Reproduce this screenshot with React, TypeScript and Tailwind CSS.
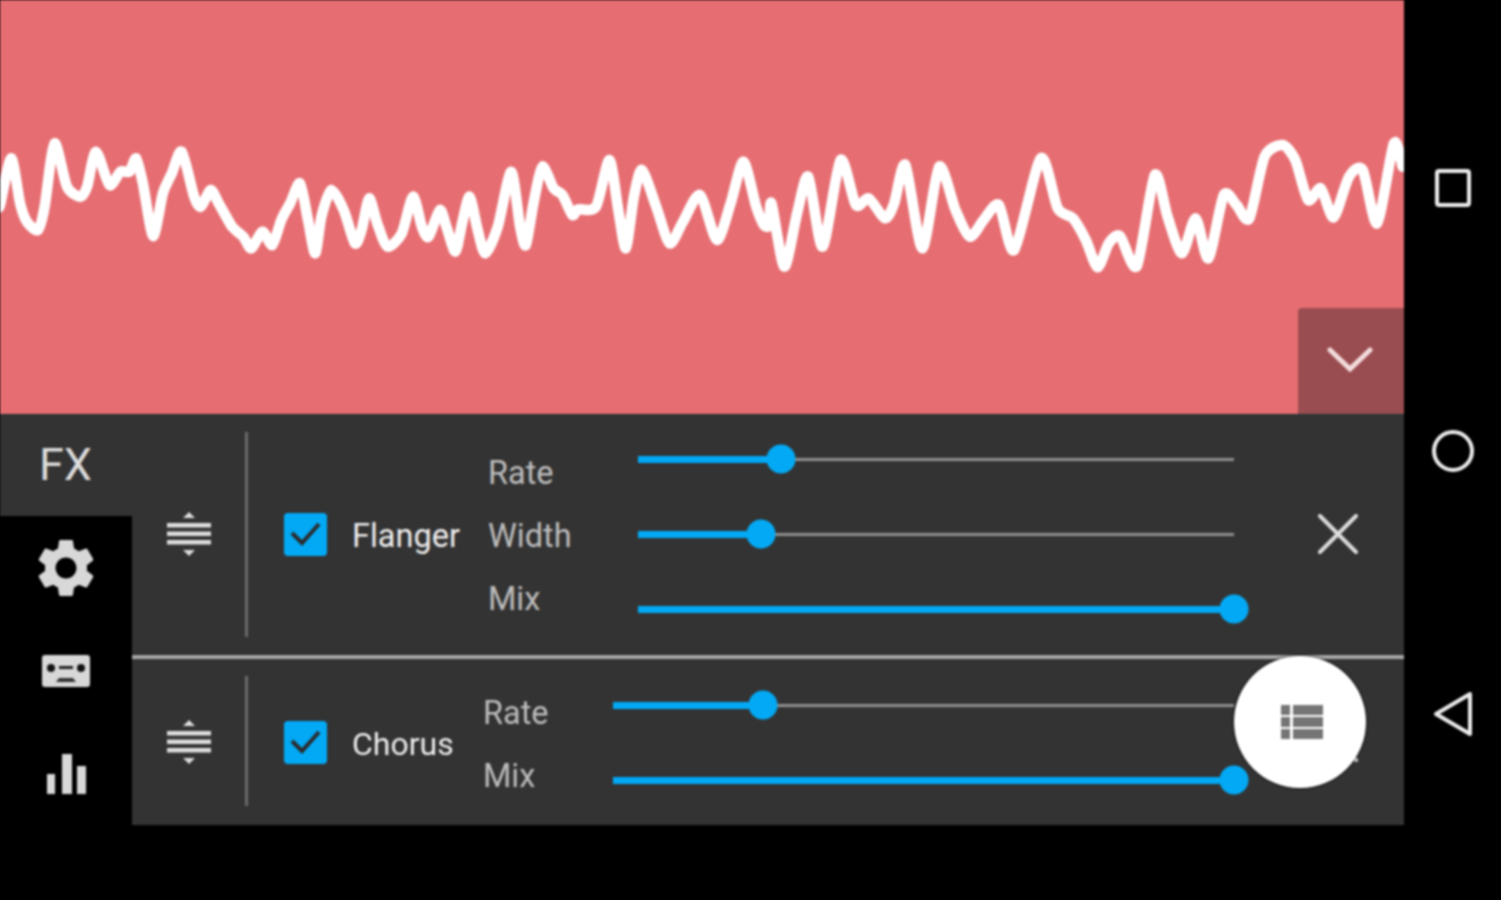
import React from 'react';

const font = { fontFamily: 'Roboto, "Liberation Sans", sans-serif' };

// wave samples read off the picture, left half then right half
const waveLeft: number[][] = [[-6,225],[0,225],[25,85],[45,220],[60,275],[85,300],[100,230],[122,40],[150,170],[180,200],[195,170],[215,65],[245,165],[270,125],[290,125],[305,85],[320,160],[343,318],[365,190],[385,130],[407,65],[435,200],[450,230],[472,180],[490,220],[520,290],[545,320],[563,355],[588,305],[610,345],[630,270],[650,220],[672,160],[690,270],[706,370],[720,260],[742,180],[770,240],[795,340],[810,300],[827,205],[845,280],[868,350],[900,310],[925,200],[945,290],[960,320],[985,240],[1000,290],[1020,365],[1035,280],[1052,200],[1070,300],[1087,370],[1115,290],[1145,125],[1165,290],[1178,345],[1195,220],[1215,110],[1240,175],[1260,195],[1282,255],[1295,238],[1335,230],[1365,90],[1385,240],[1402,355],[1420,200],[1438,120],[1470,230],[1500,340],[1530,275]];
const waveRight: number[][] = [[0,195],[33,330],[60,220],[85,95],[110,230],[125,285],[135,285],[140,220],[165,410],[190,250],[212,140],[240,350],[275,90],[305,225],[330,205],[362,265],[380,220],[402,105],[435,355],[468,110],[500,240],[528,320],[555,270],[585,225],[615,360],[667,85],[700,235],[730,265],[755,330],[778,412],[800,340],[822,318],[855,408],[890,135],[915,260],[943,370],[970,265],[995,385],[1025,195],[1050,225],[1075,265],[1105,80],[1140,45],[1165,90],[1190,210],[1215,175],[1240,262],[1270,140],[1297,120],[1325,280],[1358,40],[1375,110]];

const wavePoints = [
  ...waveLeft.map(([x, y]) => [x / 2.24, 130 + y / 3]),
  ...waveRight.map(([x, y]) => [700 + x / 1.957, 130 + y / 3]),
];

function smoothPath(pts: number[][]) {
  let d = `M${pts[0][0]} ${pts[0][1]}`;
  for (let i = 0; i < pts.length - 1; i++) {
    const p0 = pts[Math.max(i - 1, 0)];
    const p1 = pts[i];
    const p2 = pts[i + 1];
    const p3 = pts[Math.min(i + 2, pts.length - 1)];
    const c1x = p1[0] + (p2[0] - p0[0]) / 8;
    const c1y = p1[1] + (p2[1] - p0[1]) / 8;
    const c2x = p2[0] - (p3[0] - p1[0]) / 8;
    const c2y = p2[1] - (p3[1] - p1[1]) / 8;
    d += ` C${c1x.toFixed(1)} ${c1y.toFixed(1)} ${c2x.toFixed(1)} ${c2y.toFixed(1)} ${p2[0].toFixed(1)} ${p2[1].toFixed(1)}`;
  }
  return d;
}

const Slider = ({ value }: { value: number }) => (
  <div className="relative h-[7px] w-full flex items-center">
    <div className="h-[3px] w-full bg-[#8f8f8f]" />
    <div className="absolute left-0 top-0 h-[7px] bg-[#03a9f4]" style={{ width: `${value}%` }} />
    <div
      className="absolute top-1/2 z-20 h-[29px] w-[29px] -translate-x-1/2 -translate-y-1/2 rounded-full bg-[#03a9f4]"
      style={{ left: `${value}%` }}
    />
  </div>
);

const Handle = () => (
  <svg width="44" height="44" viewBox="0 0 44 44" className="text-[#dedede]" fill="currentColor">
    <path d="M16 6 L22 0 L28 6 Z" />
    <rect x="0" y="11" width="44" height="4.5" />
    <rect x="0" y="19.5" width="44" height="4.5" />
    <rect x="0" y="28" width="44" height="4.5" />
    <path d="M16 38 L22 44 L28 38 Z" />
  </svg>
);

const Check = () => (
  <div className="flex h-[43px] w-[43px] shrink-0 items-center justify-center rounded-[4px] bg-[#03a9f4]">
    <svg width="34" height="28" viewBox="0 0 34 28" fill="none">
      <path d="M3 13 L13 23 L30 4" stroke="#2b2b2b" strokeWidth="4" />
    </svg>
  </div>
);

const CloseIcon = () => (
  <svg width="40" height="40" viewBox="0 0 40 40" fill="none" stroke="#dcdcdc" strokeWidth="4" strokeLinecap="round">
    <path d="M2 2 L38 38 M38 2 L2 38" />
  </svg>
);

const Gear = () => (
  <svg width="70" height="70" viewBox="0 0 24 24" fill="#d8d8d8">
    <path d="M19.14 12.94c.04-.3.06-.61.06-.94 0-.32-.02-.64-.07-.94l2.03-1.58c.18-.14.23-.41.12-.61l-1.92-3.32c-.12-.22-.37-.29-.59-.22l-2.39.96c-.5-.38-1.03-.7-1.62-.94l-.36-2.54c-.04-.24-.24-.41-.48-.41h-3.84c-.24 0-.43.17-.47.41l-.36 2.54c-.59.24-1.13.57-1.62.94l-2.39-.96c-.22-.08-.47 0-.59.22L2.74 8.87c-.12.21-.08.47.12.61l2.03 1.58c-.05.3-.09.63-.09.94s.02.64.07.94l-2.03 1.58c-.18.14-.23.41-.12.61l1.92 3.32c.12.22.37.29.59.22l2.39-.96c.5.38 1.03.7 1.62.94l.36 2.54c.05.24.24.41.48.41h3.84c.24 0 .44-.17.47-.41l.36-2.54c.59-.24 1.13-.56 1.62-.94l2.39.96c.22.08.47 0 .59-.22l1.92-3.32c.12-.22.07-.47-.12-.61l-2.01-1.58zM12 15.6c-1.98 0-3.6-1.62-3.6-3.6s1.62-3.6 3.6-3.6 3.6 1.62 3.6 3.6-1.62 3.6-3.6 3.6z" />
  </svg>
);

const Cassette = () => (
  <svg width="48" height="32" viewBox="0 0 48 32">
    <rect width="48" height="32" rx="3" fill="#d8d8d8" />
    <circle cx="9" cy="13" r="4" fill="#111" />
    <circle cx="39" cy="13" r="4" fill="#111" />
    <rect x="17" y="11" width="14" height="3" fill="#222" />
    <path d="M14 27 L17 23 H31 L34 27 Z" fill="#333" />
  </svg>
);

const Bars = () => (
  <svg width="40" height="40" viewBox="0 0 40 40" fill="#d8d8d8">
    <rect x="0" y="20" width="8" height="20" />
    <rect x="15" y="0" width="10" height="40" />
    <rect x="30" y="12" width="9" height="28" />
  </svg>
);

const ListIcon = () => (
  <svg width="42" height="34" viewBox="0 0 42 34" fill="#757575">
    <rect x="0" y="0" width="9" height="10" />
    <rect x="12" y="0" width="30" height="10" />
    <rect x="0" y="12" width="9" height="10" />
    <rect x="12" y="12" width="30" height="10" />
    <rect x="0" y="24" width="9" height="10" />
    <rect x="12" y="24" width="30" height="10" />
  </svg>
);

export default function App() {
  return (
    <div className="h-[900px] w-[1501px] overflow-hidden bg-black" style={font}>
      <div className="flex h-full w-full blur-[0.9px]">
        <div className="flex w-[1404px] shrink-0 flex-col">
          {/* Wave */}
          <div className="relative h-[414px] bg-[#e66e72]">
            <svg width="1404" height="414" viewBox="0 0 1404 414" fill="none" className="block">
              <path d={smoothPath(wavePoints)} stroke="#fff" strokeWidth="10.5" strokeLinejoin="round" strokeLinecap="round" />
            </svg>
            <button className="absolute bottom-0 right-0 flex h-[106px] w-[106px] items-start justify-center rounded-tl-[4px] bg-[#9a4d50] pr-[2px] pt-[39px]">
              <svg width="46" height="25" viewBox="0 0 46 25" fill="none" stroke="#f3dcdc" strokeWidth="5" strokeLinecap="round">
                <path d="M3 3 L23 22 L43 3" />
              </svg>
            </button>
          </div>

          {/* FX panel */}
          <div className="flex h-[411px] border-t-2 border-[#263230]">
            <div className="flex w-[132px] shrink-0 flex-col">
              <div className="h-[100px] bg-[#333333] pl-[39px] pt-[19px] text-[45px] leading-[60px] text-[#dcdcdc]">FX</div>
              <div className="flex flex-1 flex-col items-center bg-black pt-[17px]">
                <Gear />
                <div className="mt-[52px]"><Cassette /></div>
                <div className="ml-[2px] mt-[67px]"><Bars /></div>
              </div>
            </div>

            <div className="flex flex-1 flex-col bg-[#333333] text-[#bdbdbd]">
              {/* Flanger */}
              <div className="flex h-[238px] items-center pb-[2px]">
                <div className="flex w-[113px] justify-center"><Handle /></div>
                <div className="h-[205px] w-[3px] bg-[#6a6a6a]" />
                <div className="ml-[36px]"><Check /></div>
                <div className="ml-[25px] w-[136px] pt-[4px] text-[32.5px] text-[#eeeeee]">Flanger</div>
                <div className="flex h-[189px] w-[150px] flex-col justify-between pt-[2px] text-[32.5px] leading-[63px]">
                  <div>Rate</div>
                  <div>Width</div>
                  <div>Mix</div>
                </div>
                <div className="flex w-[596px] flex-col gap-[68px]">
                  <Slider value={24} />
                  <Slider value={20.6} />
                  <Slider value={100} />
                </div>
                <div className="ml-[84px]"><CloseIcon /></div>
              </div>

              <div className="h-[5px] border-t border-[#262626] bg-[#a8a8a8]" />

              {/* Chorus */}
              <div className="relative flex flex-1 items-center">
                <div className="flex w-[113px] justify-center"><Handle /></div>
                <div className="-mt-[2px] h-[130px] w-[3px] bg-[#6a6a6a]" />
                <div className="ml-[36px]"><Check /></div>
                <div className="ml-[25px] w-[131px] pt-[3px] text-[32px] text-[#eeeeee]">Chorus</div>
                <div className="flex w-[130px] flex-col pt-[5px] text-[32.5px] leading-[63px]">
                  <div>Rate</div>
                  <div>Mix</div>
                </div>
                <div className="flex w-[621px] flex-col gap-[68px] pt-[1px]">
                  <Slider value={24.2} />
                  <Slider value={100} />
                </div>
                <div className="ml-[84px]"><CloseIcon /></div>
                <button className="absolute -top-[3px] right-[38px] z-10 flex h-[132px] w-[132px] items-center justify-center rounded-full bg-white pl-[3px] shadow-[0_0_3px_#000]">
                  <ListIcon />
                </button>
              </div>
            </div>
          </div>
          <div className="flex-1" />
        </div>

        {/* Nav bar */}
        <div className="flex flex-1 flex-col items-center pt-[168px]">
          <svg width="38" height="40" viewBox="0 0 38 40" fill="none" stroke="#ececec" strokeWidth="4">
            <rect x="3" y="3" width="32" height="34" rx="2" />
          </svg>
          <svg className="mt-[221px]" width="44" height="44" viewBox="0 0 44 44" fill="none" stroke="#ececec" strokeWidth="4">
            <circle cx="22" cy="22" r="19" />
          </svg>
          <svg className="mt-[218px]" width="40" height="46" viewBox="0 0 40 46" fill="none" stroke="#ececec" strokeWidth="4" strokeLinejoin="round">
            <path d="M37 3 L3 23 L37 43 Z" />
          </svg>
        </div>
      </div>
    </div>
  );
}
